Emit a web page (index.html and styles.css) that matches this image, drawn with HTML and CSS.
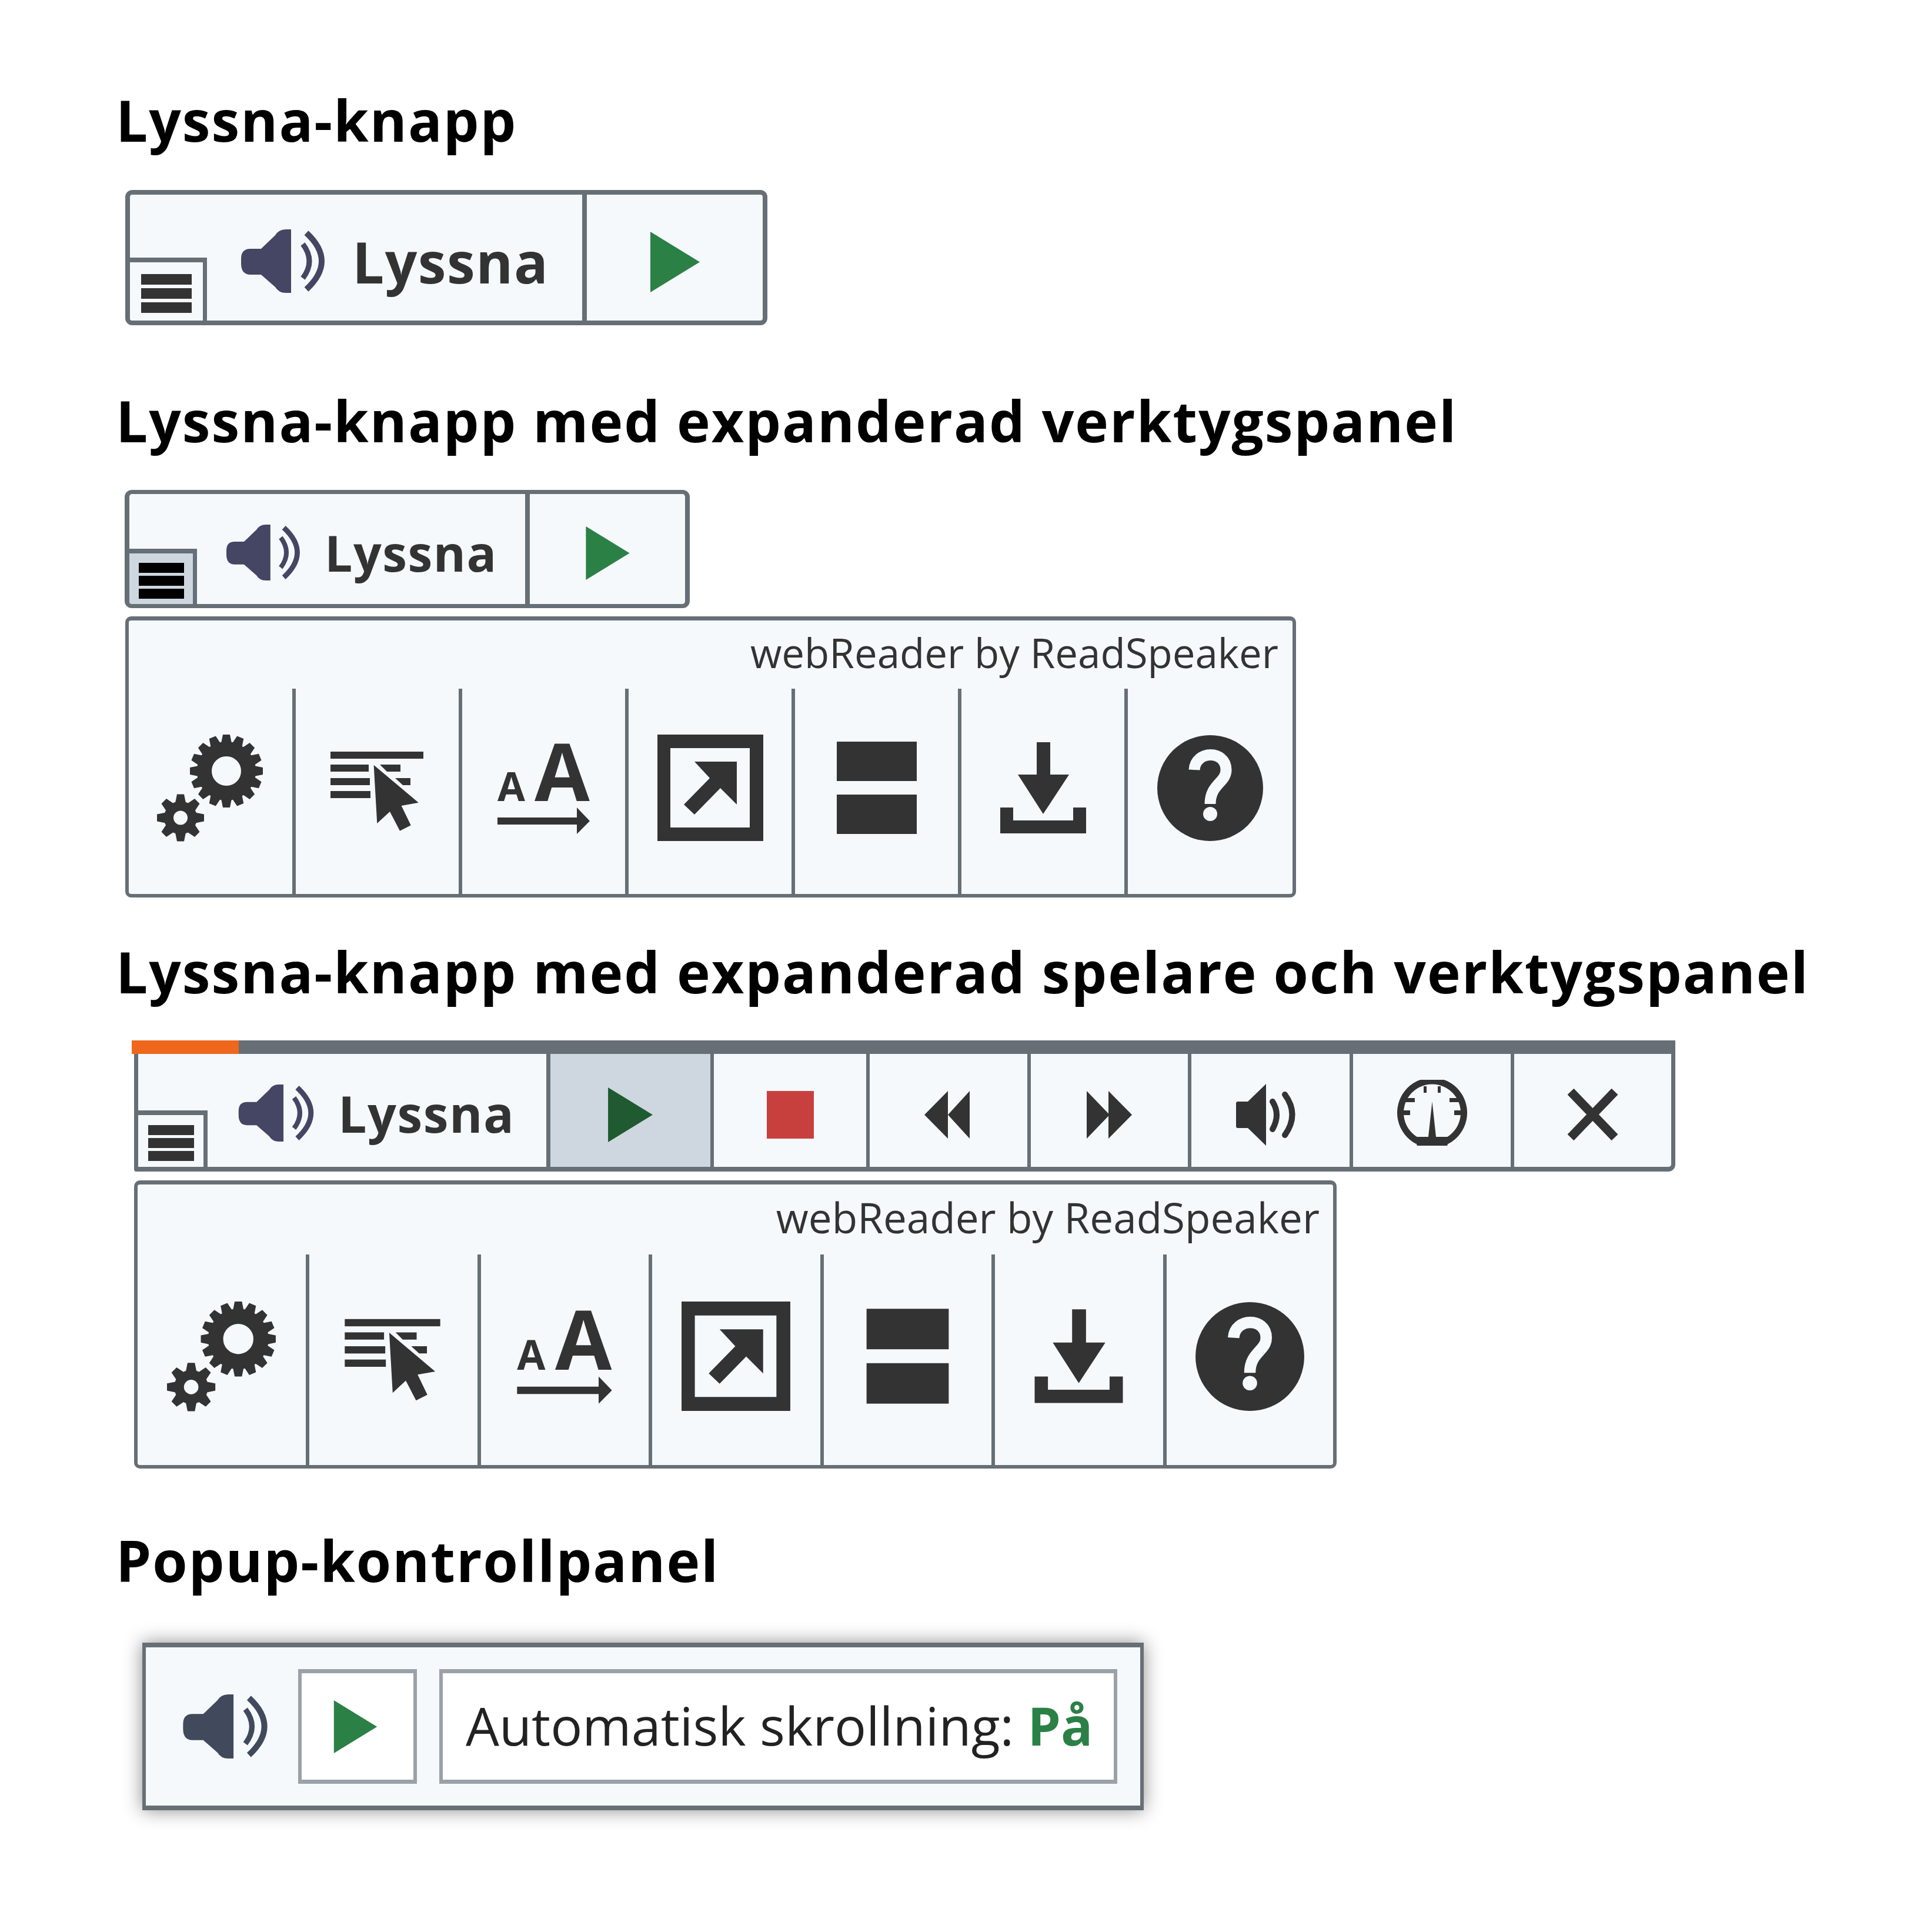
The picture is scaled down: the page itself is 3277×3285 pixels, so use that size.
FILE: index.html
```html
<!DOCTYPE html>
<html lang="sv">
<head>
    <meta charset="UTF-8">
    <title>Lyssna-knapp</title>
    <link rel="stylesheet" href="styles.css">
</head>
<body>
    <svg class="icon-defs" width="0" height="0" aria-hidden="true">
        <defs>
            <g id="tooth-big">
                <polygon points="-6,-62 6,-62 9,-47 -9,-47"/>
                <polygon points="-6,62 6,62 9,47 -9,47"/>
            </g>
            <g id="teeth-big-4">
                <use href="#tooth-big"/>
                <use href="#tooth-big" transform="rotate(90)"/>
            </g>
            <g id="teeth-big-8">
                <use href="#teeth-big-4"/>
                <use href="#teeth-big-4" transform="rotate(45)"/>
            </g>
            <g id="tooth-small">
                <polygon points="-6,-40 6,-40 9,-25 -9,-25"/>
                <polygon points="-6,40 6,40 9,25 -9,25"/>
            </g>
            <g id="teeth-small-4">
                <use href="#tooth-small"/>
                <use href="#tooth-small" transform="rotate(90)"/>
            </g>

            <symbol id="i-speaker" viewBox="0 0 142 108">
                <path d="M85 0H76Q64 0 58 10L34 33H16Q0 33 0 50V58Q0 77 16 77H34L58 98Q64 108 76 108H85Z" fill="currentColor"/>
                <path d="M105 25Q127 54 105 83" fill="none" stroke="currentColor" stroke-width="9"/>
                <path d="M111 6Q163 54 111 102" fill="none" stroke="currentColor" stroke-width="10"/>
            </symbol>
            <symbol id="i-play" viewBox="0 0 84 103">
                <polygon points="0,0 84,51.5 0,103" fill="currentColor"/>
            </symbol>
            <symbol id="i-gears" viewBox="0 0 182 182">
                <g transform="translate(118 62)">
                    <use href="#teeth-big-8"/>
                    <use href="#teeth-big-8" transform="rotate(22.5)"/>
                    <circle r="37.5" fill="none" stroke="#333" stroke-width="25"/>
                </g>
                <g transform="translate(40 141.5)">
                    <use href="#teeth-small-4"/>
                    <use href="#teeth-small-4" transform="rotate(45)"/>
                    <circle r="20" fill="none" stroke="#333" stroke-width="16"/>
                </g>
            </symbol>
            <symbol id="i-select" viewBox="0 0 182 182">
                <rect x="11" y="29" width="158" height="12"/>
                <rect x="11" y="51" width="65" height="12"/>
                <polygon points="95,51 130,51 130,63 107,63"/>
                <rect x="11" y="74" width="67" height="12"/>
                <polygon points="121,74 147,74 147,86 134,86"/>
                <rect x="11" y="96" width="68" height="12"/>
                <polygon points="84.600,51.700 160.700,115.700 131.600,121 147.700,154.300 129,163.700 112,131 90.300,151"/>
            </symbol>
            <symbol id="i-textsize" viewBox="0 0 182 182">
                <text class="icon-letter" x="12" y="113" font-size="68">A</text>
                <text class="icon-letter" x="75" y="113" font-size="136">A</text>
                <polygon points="12,141 147,141 147,124 169,147 147,169 147,153 12,153"/>
            </symbol>
            <symbol id="i-external" viewBox="0 0 182 182">
                <path fill-rule="evenodd" d="M1 0H181V181H1ZM23 23V158H158V23Z"/>
                <polygon points="64,46 136,46 136,119 108,91 64,136 46,119 90,74"/>
            </symbol>
            <symbol id="i-split" viewBox="0 0 182 182">
                <rect x="23" y="12" width="136" height="67"/>
                <rect x="23" y="102" width="136" height="67"/>
            </symbol>
            <symbol id="i-download" viewBox="0 0 182 182">
                <polygon points="80,13 103,13 103,68 135,68 91,135 48,68 80,68"/>
                <polygon points="18,124 40,124 40,146 142,146 142,124 164,124 164,168 18,168"/>
            </symbol>
            <symbol id="i-help" viewBox="0 0 182 182">
                <circle cx="91" cy="91" r="90"/>
                <path d="M64 60C66 26 118 26 118 60C118 82 91 84 91 118" fill="none" stroke="#f5f9fc" stroke-width="19"/>
                <circle cx="91" cy="135" r="12" fill="#f5f9fc"/>
            </symbol>
            <symbol id="i-rewind" viewBox="0 0 77 81">
                <polygon points="0,40.500 40,0 40,81"/>
                <polygon points="40,40.500 77,0 77,81"/>
            </symbol>
            <symbol id="i-forward" viewBox="0 0 77 81">
                <polygon points="0,0 39,40.500 0,81"/>
                <polygon points="37,0 77,40.500 37,81"/>
            </symbol>
            <symbol id="i-volume" viewBox="0 0 118 105">
                <path d="M0 33Q0 30 3 30H20L51 0V105L20 75H3Q0 75 0 72Z"/>
                <path d="M62 30Q76 52 62 77" fill="none" stroke="#333" stroke-width="10" stroke-linecap="round"/>
                <path d="M83 18Q108 52 83 87" fill="none" stroke="#333" stroke-width="10" stroke-linecap="round"/>
            </symbol>
            <symbol id="i-gauge" viewBox="0 0 119 112">
                <path d="M34.800 104A54 54 0 1 1 84.200 104" fill="none" stroke="#333" stroke-width="11"/>
                <polygon points="28,97 91,97 85,112 34,112"/>
                <polygon points="59.500,37 66,97 53,97"/>
                <rect x="45" y="11" width="5" height="11"/>
                <rect x="69" y="11" width="5" height="11"/>
                <rect x="12" y="31" width="18" height="7"/>
                <rect x="89" y="31" width="18" height="7"/>
                <rect x="10" y="52" width="12" height="8"/>
                <rect x="97" y="52" width="12" height="8"/>
            </symbol>
            <symbol id="i-close" viewBox="0 0 87 88">
                <path d="M6 5L81 83M81 5L6 83" fill="none" stroke="#333" stroke-width="15"/>
            </symbol>
        </defs>
    </svg>

    <main class="page">
        <h2 class="heading">Lyssna-knapp</h2>
        <div class="listen listen-large">
            <div class="listen-main">
                <svg class="speaker"><use href="#i-speaker"/></svg>
                <span class="listen-label">Lyssna</span>
            </div>
            <div class="listen-play"><svg class="play"><use href="#i-play"/></svg></div>
            <div class="corner-menu"><i></i><i></i><i></i></div>
        </div>

        <h2 class="heading heading-second">Lyssna-knapp med expanderad verktygspanel</h2>
        <div class="listen listen-medium">
            <div class="listen-main">
                <svg class="speaker"><use href="#i-speaker"/></svg>
                <span class="listen-label">Lyssna</span>
            </div>
            <div class="listen-play"><svg class="play"><use href="#i-play"/></svg></div>
            <div class="corner-menu corner-menu-open"><i></i><i></i><i></i></div>
        </div>
        <div class="tools tools-small">
            <div class="tools-title">webReader by ReadSpeaker</div>
            <div class="tools-row">
                <div class="tool"><svg><use href="#i-gears"/></svg></div>
                <div class="tool"><svg><use href="#i-select"/></svg></div>
                <div class="tool"><svg><use href="#i-textsize"/></svg></div>
                <div class="tool"><svg><use href="#i-external"/></svg></div>
                <div class="tool"><svg><use href="#i-split"/></svg></div>
                <div class="tool"><svg><use href="#i-download"/></svg></div>
                <div class="tool"><svg><use href="#i-help"/></svg></div>
            </div>
        </div>

        <h2 class="heading heading-third">Lyssna-knapp med expanderad spelare och verktygspanel</h2>
        <div class="player">
            <div class="progress"><div class="progress-done"></div></div>
            <div class="player-row">
                <div class="listen-main">
                    <svg class="speaker"><use href="#i-speaker"/></svg>
                    <span class="listen-label">Lyssna</span>
                </div>
                <div class="ctrl ctrl-active"><svg class="play"><use href="#i-play"/></svg></div>
                <div class="ctrl ctrl-stop"><div class="stop"></div></div>
                <div class="ctrl ctrl-rewind"><svg class="seek"><use href="#i-rewind"/></svg></div>
                <div class="ctrl ctrl-forward"><svg class="seek"><use href="#i-forward"/></svg></div>
                <div class="ctrl ctrl-volume"><svg class="volume"><use href="#i-volume"/></svg></div>
                <div class="ctrl ctrl-speed"><svg class="gauge"><use href="#i-gauge"/></svg></div>
                <div class="ctrl ctrl-close"><svg class="close"><use href="#i-close"/></svg></div>
                <div class="corner-menu corner-menu-player"><i></i><i></i><i></i></div>
            </div>
        </div>
        <div class="tools tools-big">
            <div class="tools-title">webReader by ReadSpeaker</div>
            <div class="tools-row">
                <div class="tool"><svg><use href="#i-gears"/></svg></div>
                <div class="tool"><svg><use href="#i-select"/></svg></div>
                <div class="tool"><svg><use href="#i-textsize"/></svg></div>
                <div class="tool"><svg><use href="#i-external"/></svg></div>
                <div class="tool"><svg><use href="#i-split"/></svg></div>
                <div class="tool"><svg><use href="#i-download"/></svg></div>
                <div class="tool"><svg><use href="#i-help"/></svg></div>
            </div>
        </div>

        <h2 class="heading heading-fourth">Popup-kontrollpanel</h2>
        <div class="popup">
            <svg class="speaker"><use href="#i-speaker"/></svg>
            <div class="popup-box popup-play"><svg class="play"><use href="#i-play"/></svg></div>
            <div class="popup-box popup-text">Automatisk skrollning: <b>På</b></div>
        </div>
    </main>
</body>
</html>
```

FILE: styles.css
```css
:root {
    --line: #676f76;
    --panel: #f5f9fc;
    --dark: #333;
    --green: #2b8046;
}

* {
    box-sizing: border-box;
}

html, body {
    margin: 0;
    background: #fff;
}

body {
    font-family: "Open Sans", "Noto Sans", sans-serif;
    color: var(--dark);
}

.icon-defs {
    position: absolute;
}

.page {
    width: 3277px;
    height: 3285px;
    padding: 139px 0 0 195px;
}

.heading {
    margin: 0;
    padding-left: 2px;
    font-size: 96px;
    font-weight: 700;
    letter-spacing: 2px;
    line-height: 130px;
    color: #000;
    white-space: nowrap;
}

.heading-second { margin-top: 97px; }
.heading-third { margin-top: 61px; }
.heading-fourth { margin-top: 91px; }

/* lyssna-knappen */
.listen {
    position: relative;
    display: flex;
    margin-left: 18px;
    background: var(--panel);
    border: 8px solid var(--line);
    border-radius: 12px;
}

.listen-large {
    width: 1092px;
    height: 230px;
    margin-top: 54px;
}

.listen-medium {
    width: 961px;
    height: 201px;
    margin-top: 53px;
    margin-left: 17px;
    border-width: 7px 8px;
}

.listen-main {
    display: flex;
    align-items: center;
}

.listen-label {
    font-weight: 700;
    letter-spacing: 1.5px;
}

.listen-large .listen-main {
    width: 769px;
    padding: 12px 0 0 189px;
    gap: 47px;
}

.listen-large .speaker { width: 142px; height: 108px; }
.listen-large .listen-label { font-size: 96px; }

.listen-medium .listen-main {
    width: 673px;
    padding: 12px 0 0 165px;
    gap: 42px;
}

.listen-medium .speaker { width: 125px; height: 95px; }
.listen-medium .listen-label { font-size: 84px; }

.speaker {
    flex: none;
    color: #454663;
}

.listen-play {
    flex: 1;
    display: flex;
    align-items: center;
    justify-content: center;
    padding-top: 14px;
    border-left: 8px solid var(--line);
}

.listen-large .play { width: 84px; height: 103px; }
.listen-medium .play { width: 75px; height: 91px; }

.play {
    color: var(--green);
}

/* liten menyknapp i hörnet, ligger ovanpå knappen */
.corner-menu {
    position: absolute;
    left: 0;
    bottom: 0;
    display: flex;
    flex-direction: column;
    align-items: center;
    gap: 6px;
    width: 131px;
    height: 107px;
    padding-top: 20px;
    background: var(--panel);
    border: solid var(--line);
    border-width: 8px 7px 0 0;
    border-bottom-left-radius: 4px;
}

.corner-menu i {
    width: 86px;
    height: 18px;
    background: var(--dark);
}

.corner-menu-open {
    width: 115px;
    height: 94px;
    padding-top: 16px;
    gap: 5px;
    background: #ced7df;
}

.corner-menu-open i {
    width: 77px;
    height: 17px;
    background: #000;
}

.corner-menu-player {
    width: 118px;
    height: 96px;
    padding-top: 17px;
    gap: 5px;
}

.corner-menu-player i {
    width: 78px;
    height: 17px;
}

/* verktygspanel */
.tools {
    display: flex;
    flex-direction: column;
    background: var(--panel);
    border: solid var(--line);
    border-width: 7px 6px 6px;
    border-radius: 10px;
}

.tools-title {
    text-align: right;
    white-space: nowrap;
}

.tools-row {
    flex: 1;
    display: flex;
}

.tool {
    display: flex;
    align-items: center;
    justify-content: center;
    border-left: 6px solid var(--line);
}

.tool:first-child {
    border-left: 0;
}

.tool:last-child {
    flex: 1;
}

.tool svg {
    fill: var(--dark);
}

.icon-letter {
    font-family: "Open Sans", sans-serif;
    font-weight: 700;
    fill: var(--dark);
}

.tools-small {
    width: 1991px;
    height: 478px;
    margin: 14px 0 0 18px;
}

.tools-small .tools-title {
    height: 116px;
    padding: 7px 24px 0 0;
    font-size: 69px;
    line-height: 94px;
}

.tools-small .tool {
    width: 283px;
    padding-bottom: 12px;
}

.tools-small .tool:first-child { width: 278px; }
.tools-small .tool svg { width: 182px; height: 182px; }

.tools-big {
    width: 2045px;
    height: 490px;
    margin: 15px 0 0 33px;
}

.tools-big .tools-title {
    height: 119px;
    padding: 8px 23px 0 0;
    font-size: 71px;
    line-height: 96px;
}

.tools-big .tool {
    width: 291.5px;
    padding-bottom: 12px;
}

.tools-big .tool:first-child { width: 286px; }
.tools-big .tool svg { width: 187px; height: 187px; }

/* spelaren */
.player {
    width: 2625px;
    margin: 52px 0 0 29px;
}

.progress {
    height: 23px;
    background: var(--line);
}

.progress-done {
    width: 182px;
    height: 100%;
    background: #ee671d;
}

.player-row {
    position: relative;
    display: flex;
    height: 200px;
    margin-left: 4px;
    background: var(--panel);
    border: solid var(--line);
    border-width: 0 7px 8px 7px;
    border-radius: 0 0 12px 4px;
}

.player-row .listen-main {
    width: 694px;
    padding: 9px 0 0 170px;
    gap: 41px;
}

.player-row .speaker { width: 129px; height: 97px; }
.player-row .listen-label { font-size: 86px; }

.ctrl {
    flex: none;
    display: flex;
    align-items: center;
    justify-content: center;
    padding-top: 14px;
    border-left: 6px solid var(--line);
}

.ctrl-active {
    width: 285px;
    background: #ced7df;
    border-left-width: 7px;
    border-right: 6px solid var(--line);
}

.ctrl-active .play {
    width: 78px;
    height: 93px;
    color: #1f5a30;
}

.ctrl-stop {
    width: 259px;
    border-left: 0;
}

.stop {
    width: 80px;
    height: 81px;
    background: #c8403d;
}

.ctrl-rewind { width: 274px; padding-right: 5px; }
.ctrl-forward { width: 273px; }
.ctrl-volume { width: 275px; }
.ctrl-speed { width: 274px; padding-top: 8px; }
.ctrl-close { width: 272px; }

.seek { width: 77px; height: 81px; fill: var(--dark); }
.volume { width: 118px; height: 105px; fill: var(--dark); }
.gauge { width: 119px; height: 112px; fill: var(--dark); }
.close { width: 87px; height: 88px; }

/* popup */
.popup {
    display: flex;
    align-items: center;
    width: 1703px;
    height: 285px;
    margin: 75px 0 0 47px;
    padding-left: 63px;
    background: var(--panel);
    border: solid var(--line);
    border-width: 8px 6px;
    box-shadow: 0 0 30px rgba(0, 0, 0, 0.45);
}

.popup .speaker {
    width: 144px;
    height: 109px;
    color: #404a5c;
}

.popup-box {
    display: flex;
    align-items: center;
    height: 195px;
    background: #fff;
    border: solid #9aa1a8;
    border-width: 7px 6px;
}

.popup-play {
    justify-content: center;
    width: 202px;
    margin-left: 52px;
    padding-right: 7px;
}

.popup-play .play { width: 75px; height: 90px; }

.popup-text {
    width: 1153px;
    margin-left: 38px;
    padding: 0 0 6px 39px;
    font-size: 90px;
    color: #222;
    white-space: pre;
}

.popup-text b {
    font-weight: 700;
    color: var(--green);
}
```
